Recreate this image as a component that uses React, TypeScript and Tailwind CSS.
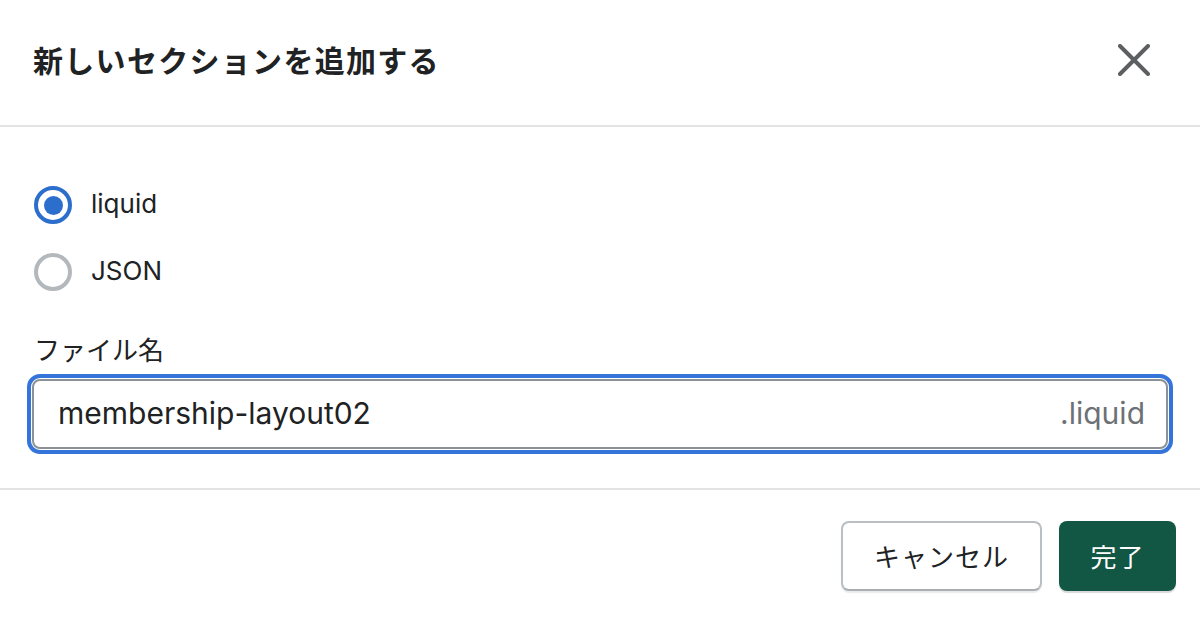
import React from "react";

const jp = "font-['Inter','Noto_Sans_CJK_JP',sans-serif]";

export default function App() {
  return (
    <div className={`w-[1200px] h-[619px] bg-white text-[#202223] ${jp} overflow-hidden`}>
      <div className="h-[127px] flex items-center justify-between pl-[33px] pr-[50px] border-b-2 border-[#e1e3e5]">
        <h1 className="text-[30px] font-bold leading-none tracking-[1.3px] font-['Noto_Sans_CJK_JP',sans-serif] pb-[8px]">新しいセクションを追加する</h1>
        <svg width="32" height="32" viewBox="0 0 32 32" className="mb-[6px]">
          <path d="M2 2 L30 30 M30 2 L2 30" stroke="#5c5f62" strokeWidth="4" strokeLinecap="round" />
        </svg>
      </div>
      <div className="px-[32px] pt-[59px] pb-[39px] border-b-2 border-[#e1e3e5]">
        <div className="flex flex-col gap-[29px] pl-[2px]">
          <label className="flex items-center gap-[19px]">
            <span className="w-[38px] h-[38px] rounded-full border-[4px] border-[#2c6ecb] flex items-center justify-center">
              <span className="w-[19px] h-[19px] rounded-full bg-[#2c6ecb]" />
            </span>
            <span className="text-[26px] leading-none pb-[2px]">liquid</span>
          </label>
          <label className="flex items-center gap-[19px]">
            <span className="w-[38px] h-[38px] rounded-full border-[4px] border-[#b3b8bd]" />
            <span className="text-[26px] leading-none pb-[2px]">JSON</span>
          </label>
        </div>
        <div className="mt-[42px] text-[26px] leading-[32px] font-['Noto_Sans_CJK_JP',sans-serif] pl-[2px]">ファイル名</div>
        <div className="mt-[14px] h-[70px] rounded-[8px] border-2 border-[#8c9196] outline-4 outline-[#3574d8] outline-offset-[1px] flex items-center justify-between pl-[24px] pr-[21px]">
          <span className="text-[30px] leading-none text-[#202223] pb-[2px]">membership-layout02</span>
          <span className="text-[30px] leading-none text-[#6d7175] pb-[2px]">.liquid</span>
        </div>
      </div>
      <div className="flex justify-end gap-[17px] pt-[31px] pr-[24px]">
        <button className="w-[201px] h-[70px] rounded-[8px] border-2 border-[#babfc3] border-b-[#a9aeb3] bg-white shadow-[0_2px_1px_rgba(0,0,0,0.08)] text-[26px] font-['Noto_Sans_CJK_JP',sans-serif] text-[#202223] tracking-[1px] pb-[2px]">キャンセル</button>
        <button className="w-[117px] h-[70px] rounded-[8px] bg-[#125644] shadow-[0_2px_1px_rgba(0,0,0,0.15)] text-[26px] font-['Noto_Sans_CJK_JP',sans-serif] text-white tracking-[1px] pb-[2px]">完了</button>
      </div>
    </div>
  );
}
